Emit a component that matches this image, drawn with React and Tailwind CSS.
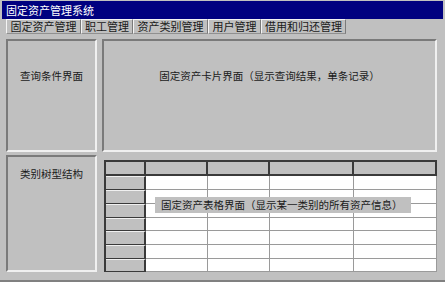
import React from 'react';

const tabs = [
  { label: '固定资产管理', w: 'w-[75px]' },
  { label: '职工管理', w: 'w-[52px]' },
  { label: '资产类别管理', w: 'w-[75px]' },
  { label: '用户管理', w: 'w-[53px]' },
  { label: '借用和归还管理', w: 'w-[85px]' },
];

const rowHeights = ['h-[14px]', 'h-[14px]', 'h-[14px]', 'h-[14px]', 'h-[13px]', 'h-[14px]', 'h-[14px]', 'h-[13px]'];
const colCount = 5;

const App = () => {
  return (
    <div
      className="w-[445px] h-[282px] bg-[#c0c0c0] text-[#1a1a1a] overflow-hidden flex flex-col pt-[1px] px-[2px] border-b-2 border-[#808080]"
      style={{ fontFamily: '"Noto Sans CJK SC", "Noto Sans", sans-serif' }}
    >
      {/* 标题栏 */}
      <div className="h-[18px] bg-[#000080] text-white text-[11px] leading-none flex items-center pl-[4px]">
        固定资产管理系统
      </div>

      {/* 选项卡 */}
      <div className="flex h-[15px] pl-[4px]">
        {tabs.map((t) => (
          <div
            key={t.label}
            className={`${t.w} h-full flex items-center justify-center text-[11px] leading-none border-t border-l border-[#f4f4f4] border-r border-r-[#7a7a7a] border-b border-b-[#909090]`}
          >
            {t.label}
          </div>
        ))}
      </div>

      {/* 主体区域 */}
      <div className="mt-[5px] pl-[4px] grid grid-cols-[91px_335px] grid-rows-[113px_117px] gap-x-[5px] gap-y-[3px]">
        <div className="border-2 border-t-[#7a7a7a] border-l-[#7a7a7a] border-b-[#f0f0f0] border-r-[#f0f0f0] text-center text-[10.5px] leading-[14px] pt-[28px]">
          查询条件界面
        </div>
        <div className="border-2 border-t-[#7a7a7a] border-l-[#7a7a7a] border-b-[#f0f0f0] border-r-[#f0f0f0] text-center text-[10.5px] leading-[14px] pt-[28px]">
          固定资产卡片界面（显示查询结果，单条记录）
        </div>
        <div className="border-2 border-t-[#7a7a7a] border-l-[#7a7a7a] border-b-[#f0f0f0] border-r-[#f0f0f0] text-center text-[10.5px] leading-[14px] pt-[10px]">
          类别树型结构
        </div>

        {/* 表格区域 */}
        <div className="relative pt-[5px] pl-[2px]">
          <div className="w-[333px] border-t-2 border-l-2 border-[#3a3a3a] grid grid-cols-[40px_62px_62px_84px_83px]">
            {rowHeights.map((h, r) =>
              Array.from({ length: colCount }).map((_, c) => {
                if (r === 0) {
                  return (
                    <div
                      key={`${r}-${c}`}
                      className={`${h} bg-[#c0c0c0] border-r-2 border-b-2 border-[#3a3a3a]`}
                    />
                  );
                }
                if (c === 0) {
                  return (
                    <div
                      key={`${r}-${c}`}
                      className={`${h} bg-[#c0c0c0] border-t border-t-[#f0f0f0] border-r-2 border-b border-[#3a3a3a]`}
                    />
                  );
                }
                return (
                  <div
                    key={`${r}-${c}`}
                    className={`${h} bg-white border-r border-b border-[#9a9a9a]`}
                  />
                );
              })
            )}
          </div>

          {/* 覆盖标签 */}
          <div className="absolute left-[53px] top-[42px] w-[256px] h-[16px] bg-[#c0c0c0] text-[10.5px] leading-[16px] pl-[6px] whitespace-nowrap">
            固定资产表格界面（显示某一类别的所有资产信息）
          </div>
        </div>
      </div>
    </div>
  );
};

export default App;
